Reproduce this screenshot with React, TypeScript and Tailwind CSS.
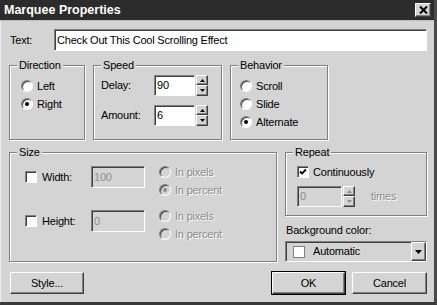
import type React from "react";

const sunken =
  "border-t border-l border-b border-r border-t-[#808080] border-l-[#808080] border-b-white border-r-white shadow-[inset_1px_1px_0_#404040]";
const raised =
  "border-t border-l border-b border-r border-t-white border-l-white border-b-[#404040] border-r-[#404040] shadow-[inset_-1px_-1px_0_#808080] bg-[#d4d4d4]";
const dimText = "text-[#8c8c8c] [text-shadow:1px_1px_0_#fff]";

function Radio({ label, checked, disabled }: { label: string; checked?: boolean; disabled?: boolean }) {
  return (
    <div className="flex items-center h-[18px] gap-[4px]">
      <span
        className={`w-3 h-3 rounded-full ${sunken} flex items-center justify-center ${disabled ? "bg-[#d4d4d4]" : "bg-white"}`}
      >
        {checked && <span className={`w-[4px] h-[4px] rounded-full ${disabled ? "bg-[#8c8c8c]" : "bg-black"}`} />}
      </span>
      <span className={disabled ? dimText : ""}>{label}</span>
    </div>
  );
}

function Check({ checked }: { checked?: boolean }) {
  return (
    <span className={`w-3 h-3 ${sunken} bg-white flex items-center justify-center shrink-0`}>
      {checked && (
        <svg width="8" height="8" viewBox="0 0 8 8">
          <path d="M1 3.5 L3 5.5 L7 1.5" stroke="#000" strokeWidth="1.8" fill="none" />
        </svg>
      )}
    </span>
  );
}

function Field({ value, className, disabled }: { value: string; className: string; disabled?: boolean }) {
  return (
    <div
      className={`${className} h-[21px] ${sunken} flex items-center pl-[2px] ${disabled ? "bg-[#d4d4d4] text-[#8c8c8c]" : "bg-white"}`}
    >
      {value}
    </div>
  );
}

function Arrow({ up, dim, w = 5 }: { up?: boolean; dim?: boolean; w?: number }) {
  const h = Math.ceil(w / 2);
  return (
    <svg width={w} height={h} viewBox={`0 0 ${w} ${h}`}>
      <path d={up ? `M0 ${h} L${w / 2} 0 L${w} ${h} Z` : `M0 0 L${w} 0 L${w / 2} ${h} Z`} fill={dim ? "#8c8c8c" : "#000"} />
    </svg>
  );
}

function Spin({ dim }: { dim?: boolean }) {
  return (
    <div className="flex flex-col w-[12px] h-[21px]">
      <div className={`h-[10px] ${raised} flex items-center justify-center`}>
        <Arrow up dim={dim} />
      </div>
      <div className={`h-[11px] ${raised} flex items-center justify-center`}>
        <Arrow dim={dim} />
      </div>
    </div>
  );
}

function Group({
  label,
  className,
  inner,
  children,
}: {
  label: string;
  className: string;
  inner: string;
  children: React.ReactNode;
}) {
  return (
    <fieldset
      className={`${className} border border-[#808080] shadow-[1px_1px_0_#fff,inset_1px_1px_0_#fff] min-w-0`}
    >
      <legend className="ml-[7px] px-[2px] leading-[13px] bg-[#d4d4d4]">{label}</legend>
      <div className={inner}>{children}</div>
    </fieldset>
  );
}

function Btn({ label, className }: { label: string; className: string }) {
  return (
    <div className={`${className} h-[22px] ${raised} flex items-center justify-center`}>{label}</div>
  );
}

export default function App() {
  return (
    <div
      className="w-[437px] h-[305px] bg-[#d4d4d4] text-[11px] tracking-[-0.2px] text-black flex flex-col border-r-[3px] border-b-[3px] border-r-[#4a4a4a] border-b-[#3a3a3a] overflow-hidden"
      style={{ fontFamily: '"Liberation Sans", Arial, sans-serif' }}
    >
      <div className="h-[21px] bg-[#2c2c2c] flex items-center justify-between pl-[4px] pr-[3px] border-b border-b-[#bdbdbd]">
        <span className="text-white font-bold text-[12.5px] tracking-normal">Marquee Properties</span>
        <div className={`w-[16px] h-[14px] ${raised} flex items-center justify-center`}>
          <svg width="9" height="8" viewBox="0 0 9 8">
            <path d="M1 0.5 L8 7.5 M8 0.5 L1 7.5" stroke="#000" strokeWidth="2" />
          </svg>
        </div>
      </div>

      <div className="flex-1 flex flex-col pl-[8px] pr-[7px] pt-[8px] border-l border-l-[#eeeeee]">
        <div className="flex items-center h-[22px]">
          <span className="w-[45px] pl-[1px]">Text:</span>
          <Field value="Check Out This Cool Scrolling Effect" className="w-[373px] h-[22px]" />
        </div>

        <div className="flex mt-[8px] gap-[8px]">
          <Group label="Direction" className="w-[76px] h-[81px]" inner="pl-[11px] pt-[5px]">
            <Radio label="Left" />
            <Radio label="Right" checked />
          </Group>
          <Group label="Speed" className="w-[129px] h-[81px]" inner="pl-[7px] pt-[3px]">
            <div className="flex items-center">
              <span className="w-[53px]">Delay:</span>
              <Field value="90" className="w-[41px]" />
              <div className="ml-[1px]">
                <Spin />
              </div>
            </div>
            <div className="flex items-center mt-[9px]">
              <span className="w-[53px]">Amount:</span>
              <Field value="6" className="w-[41px]" />
              <div className="ml-[1px]">
                <Spin />
              </div>
            </div>
          </Group>
          <Group label="Behavior" className="w-[98px] h-[81px]" inner="pl-[9px] pt-[5px]">
            <Radio label="Scroll" />
            <Radio label="Slide" />
            <Radio label="Alternate" checked />
          </Group>
        </div>

        <div className="flex mt-[6px] gap-[8px]">
          <Group label="Size" className="w-[269px] h-[116px]" inner="pl-[15px] pt-[4px]">
            <div className="flex items-start">
              <div className="flex items-center h-[22px] mt-[3px]">
                <Check />
                <span className="ml-[5px] w-[49px]">Width:</span>
                <Field value="100" className="w-[54px] h-[22px]" disabled />
              </div>
              <div className="ml-[14px] flex flex-col">
                <Radio label="In pixels" disabled />
                <Radio label="In percent" checked disabled />
              </div>
            </div>
            <div className="flex items-start mt-[8px]">
              <div className="flex items-center h-[22px] mt-[3px]">
                <Check />
                <span className="ml-[5px] w-[49px]">Height:</span>
                <Field value="0" className="w-[54px] h-[22px]" disabled />
              </div>
              <div className="ml-[14px] flex flex-col">
                <Radio label="In pixels" disabled />
                <Radio label="In percent" disabled />
              </div>
            </div>
          </Group>

          <div className="w-[142px] flex flex-col">
            <Group label="Repeat" className="w-[142px] h-[70px]" inner="pl-[11px] pt-[4px]">
              <div className="flex items-center h-[18px] gap-[4px]">
                <Check checked />
                <span>Continuously</span>
              </div>
              <div className="flex items-center mt-[5px]">
                <Field value="0" className="w-[45px]" disabled />
                <div className="ml-[1px]">
                  <Spin dim />
                </div>
                <span className={`ml-[16px] ${dimText}`}>times</span>
              </div>
            </Group>
            <div className="mt-[8px] leading-[13px] pl-[1px]">Background color:</div>
            <div className={`mt-[4px] h-[21px] ${sunken} bg-[#d4d4d4] flex items-center`}>
              <span className="ml-[7px] w-3 h-3 bg-white border border-[#808080]" />
              <span className="ml-[8px] flex-1">Automatic</span>
              <div className={`w-[15px] h-[19px] ${raised} flex items-center justify-center`}>
                <Arrow w={7} />
              </div>
            </div>
          </div>
        </div>

        <div className="flex mt-[9px] items-center">
          <Btn label="Style..." className="w-[74px] ml-[1px]" />
          <div className="flex-1" />
          <div className="border border-black">
            <Btn label="OK" className="w-[73px] h-[20px]" />
          </div>
          <Btn label="Cancel" className="w-[75px] ml-[6px]" />
        </div>
      </div>
    </div>
  );
}
